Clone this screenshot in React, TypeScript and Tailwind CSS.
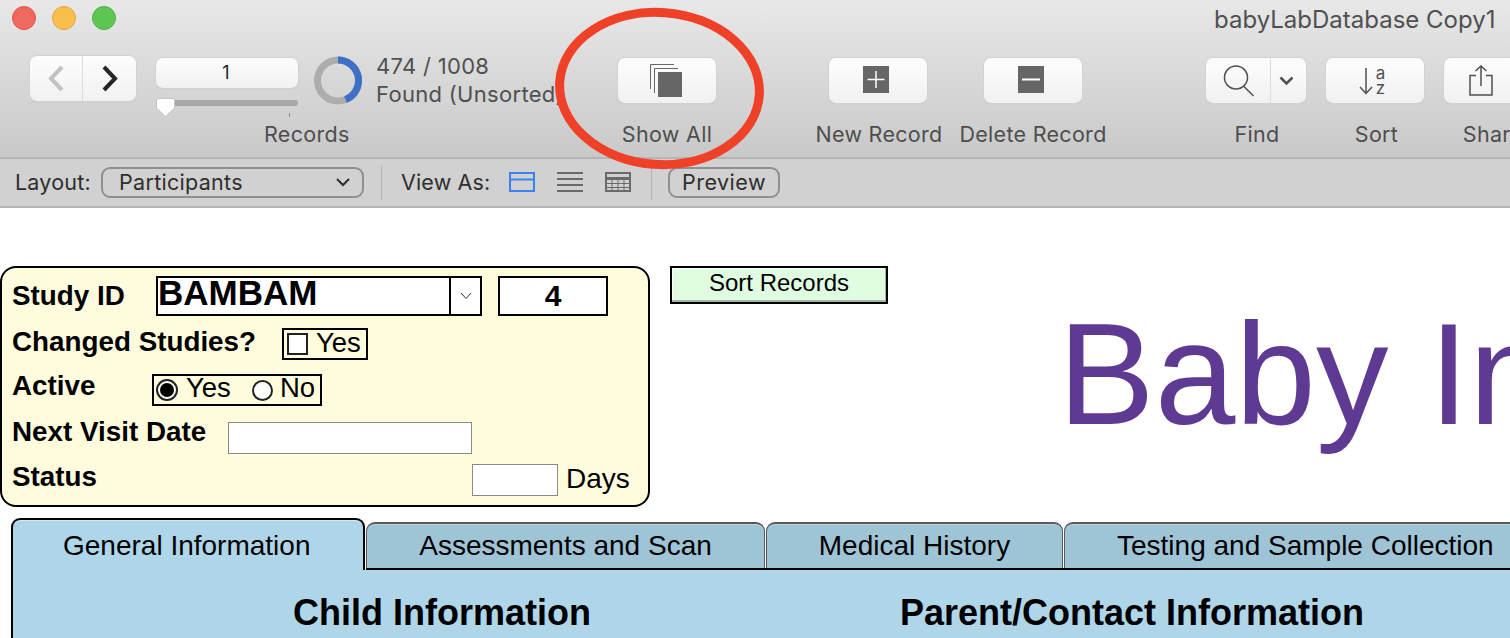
import type { ReactNode } from 'react';

const sf = "font-['Inter',sans-serif]";
const form = "font-['Liberation_Sans',Arial,sans-serif]";
const btn = 'rounded-[7px] bg-gradient-to-b from-[#fdfdfd] to-[#f1f1f1] shadow-[0_0_0_1px_#d2d2d2,0_1px_1px_#a8a8a8]';
const toolLabel = 'h-[24px] whitespace-nowrap text-[21.5px] leading-[24px] tracking-[0.3px] text-[#4e4e4e]';

function Tool({ label, ml, w, children, inner = '', labelPad = '' }: { label: string; ml: string; w: string; children: ReactNode; inner?: string; labelPad?: string }) {
  return (
    <div className={`flex shrink-0 flex-col items-center pt-[2px] ${ml} ${w}`}>
      <div className={`${btn} flex h-[45px] w-full items-center justify-center ${inner}`}>{children}</div>
      <div className={`mt-[19px] ${toolLabel} ${labelPad}`}>{label}</div>
    </div>
  );
}

function Toolbar() {
  return (
    <div className={`${sf} h-[157px] bg-gradient-to-b from-[#e8e8e8] to-[#c9c9c9]`}>
      <div className="flex h-[56px] items-start">
        <div className="flex gap-[16px] pl-[12px] pt-[6px]">
          <div className="h-[24px] w-[24px] rounded-full border border-[#e2544c] bg-[#f0695f]" />
          <div className="h-[24px] w-[24px] rounded-full border border-[#e0a63e] bg-[#f8bf4d]" />
          <div className="h-[24px] w-[24px] rounded-full border border-[#4cae45] bg-[#5ec552]" />
        </div>
        <div className="ml-[1098px] whitespace-nowrap pt-[5px] text-[24px] leading-[30px] text-[#505050]">babyLabDatabase Copy1</div>
      </div>
      <div className="flex items-start pl-[30px]">
        <div className="w-[525px] shrink-0">
          <div className="flex h-[66px] items-start">
            <div className={`${btn} flex h-[45px] w-[106px] shrink-0`}>
              <div className="flex w-[53px] items-center justify-center border-r border-[#dcdcdc]">
                <svg width="18" height="27" viewBox="0 0 18 27" fill="none" stroke="#c2c2c2" strokeWidth="4"><path d="M15 2 4 13.500 15 25" /></svg>
              </div>
              <div className="flex flex-1 items-center justify-center">
                <svg width="18" height="27" viewBox="0 0 18 27" fill="none" stroke="#262626" strokeWidth="4"><path d="M3 2 14 13.500 3 25" /></svg>
              </div>
            </div>
            <div className="ml-[20px] w-[142px] shrink-0 pt-[2px]">
              <div className={`${btn} h-[30px] pr-[2px] text-center text-[18px] leading-[30px] text-[#222]`}>1</div>
              <div className="relative mt-[12px] h-[6px] rounded-full bg-[#a9a9a9]">
                <svg className="absolute left-0 top-[-2px]" width="19" height="19" viewBox="0 0 19 19">
                  <path d="M2 .5h15a1.500 1.500 0 0 1 1.500 1.500v8L9.500 18.500.5 10V2A1.500 1.500 0 0 1 2 .5Z" fill="#fff" stroke="#c4c4c4" />
                </svg>
                <div className="absolute left-[133px] top-[13px] h-[4px] w-px bg-[#8e8e8e]" />
              </div>
            </div>
            <svg className="ml-[16px] shrink-0" width="48" height="49" viewBox="0 0 48 49" fill="none" strokeWidth="7">
              <circle cx="24" cy="24.500" r="20.500" stroke="#adadad" />
              <path d="M24 4A20.500 20.500 0 0 1 31.500 43.600" stroke="#3f6fc6" />
            </svg>
            <div className="ml-[14px] mt-[-4px] whitespace-nowrap text-[22px] leading-[28px] tracking-[0.3px] text-[#505050]">
              474 / 1008
              <br />
              Found (Unsorted)
            </div>
          </div>
          <div className={`${toolLabel} pl-[234px]`}>Records</div>
        </div>
        <Tool label="Show All" ml="ml-[63px]" w="w-[98px]" inner="pr-[2px]">
          <svg width="32" height="33" viewBox="0 0 32 33" fill="none" stroke="#666" strokeWidth="1">
            <path d="M.5 25V.5H24" />
            <path d="M4.500 29V4.500H28" />
            <rect x="8" y="8" width="24" height="25" fill="#666" stroke="none" />
          </svg>
        </Tool>
        <Tool label="New Record" ml="ml-[113px]" w="w-[98px]" inner="pb-[2px] pr-[4px]" labelPad="pl-[2px]">
          <svg width="26" height="27" viewBox="0 0 26 27"><rect width="26" height="27" fill="#666" /><path d="M13 5v17M4.500 13.500h17" stroke="#fff" strokeWidth="1.500" /></svg>
        </Tool>
        <Tool label="Delete Record" ml="ml-[57px]" w="w-[98px]" inner="pb-[2px] pr-[4px]">
          <svg width="26" height="27" viewBox="0 0 26 27"><rect width="26" height="27" fill="#666" /><path d="M4 13.500h18" stroke="#fff" strokeWidth="2" /></svg>
        </Tool>
        <div className="ml-[124px] flex w-[100px] shrink-0 flex-col items-center pt-[2px]">
          <div className={`${btn} flex h-[45px] w-full`}>
            <div className="flex w-[65px] items-center justify-center border-r border-[#dcdcdc]">
              <svg width="34" height="33" viewBox="0 0 34 33" fill="none" stroke="#505050" strokeWidth="1.500"><circle cx="15" cy="13.500" r="11.500" /><path d="m22.500 22 10 10" /></svg>
            </div>
            <div className="flex flex-1 items-center justify-center pr-[4px]">
              <svg width="15" height="10" viewBox="0 0 15 10" fill="none" stroke="#505050" strokeWidth="2.500"><path d="m1.500 1.500 6 6 6-6" /></svg>
            </div>
          </div>
          <div className={`mt-[19px] ${toolLabel} pl-[2px]`}>Find</div>
        </div>
        <Tool label="Sort" ml="ml-[20px]" w="w-[98px]" inner="pr-[6px]" labelPad="pl-[3px]">
          <svg width="14" height="28" viewBox="0 0 14 28" fill="none" stroke="#505050" strokeWidth="1.500"><path d="M7 1v25M1 20l6 6.500L13 20" /></svg>
          <div className="ml-[3px] flex flex-col items-center text-[17px] leading-[15px] text-[#505050]">
            <span>a</span>
            <span>z</span>
          </div>
        </Tool>
        <Tool label="Share" ml="ml-[20px]" w="w-[98px]" inner="pr-[24px]">
          <svg width="24" height="31" viewBox="0 0 24 31" fill="none" stroke="#505050" strokeWidth="1.500"><path d="M7 10.500H1V30h22V10.500h-6M12 21V1M6.500 6 12 1l5.500 5" /></svg>
        </Tool>
      </div>
    </div>
  );
}

function LayoutBar() {
  return (
    <div className={`${sf} flex h-[51px] items-center border-y-2 border-[#b4b4b4] bg-[#d1d1d1] pb-[1px] pl-[15px] text-[21.5px] text-[#2e2e2e]`}>
      <span className="w-[86px] shrink-0 tracking-[0.2px]">Layout:</span>
      <div className="flex h-[31px] w-[263px] shrink-0 items-center justify-between rounded-[9px] border-2 border-[#8f8f8f] pl-[16px] pr-[12px]">
        <span className="tracking-[0.3px]">Participants</span>
        <svg width="14" height="9" viewBox="0 0 14 9" fill="none" stroke="#2e2e2e" strokeWidth="2"><path d="m1 1 6 6 6-6" /></svg>
      </div>
      <div className="ml-[17px] h-[35px] w-px bg-[#b2b2b2]" />
      <span className="ml-[19px] w-[108px] shrink-0 tracking-[0.15px]">View As:</span>
      <svg width="26" height="20" viewBox="0 0 26 20" fill="none" stroke="#3a82f7" strokeWidth="2"><rect x="1" y="1" width="24" height="18" /><path d="M1 7.500h24" /></svg>
      <svg className="ml-[22px]" width="26" height="20" viewBox="0 0 26 20" fill="none" stroke="#6a6a6a" strokeWidth="2"><path d="M0 1h26M0 7h26M0 13h26M0 19h26" /></svg>
      <svg className="ml-[22px]" width="26" height="20" viewBox="0 0 26 20" fill="none" stroke="#6a6a6a"><rect x="1" y="1" width="24" height="18" strokeWidth="2" /><path d="M1 6.500h24" strokeWidth="3" /><path d="M1 11.500h24M1 15.500h24M7 7v12M13 7v12M19 7v12" /></svg>
      <div className="ml-[20px] h-[35px] w-px bg-[#b2b2b2]" />
      <div className="ml-[16px] flex h-[31px] w-[112px] shrink-0 items-center justify-center rounded-[9px] border-2 border-[#8f8f8f] tracking-[0.5px]">Preview</div>
    </div>
  );
}

function Label({ w, shift, children }: { w: string; shift: string; children: ReactNode }) {
  return <div className={`shrink-0 whitespace-nowrap text-[27.8px] font-bold ${w} ${shift}`}>{children}</div>;
}

function StudyPanel() {
  return (
    <div className="h-[241px] w-[650px] shrink-0 rounded-[16px] border-2 border-black bg-[#fefcdd] pl-[10px] pt-[8px] text-black">
      <div className="flex h-[40px] items-center">
        <Label w="w-[144px]" shift="">Study ID</Label>
        <div className="flex h-[40px] w-[326px] shrink-0 border-2 border-black bg-white">
          <div className="flex-1 text-[35px] font-bold leading-[30px]">BAMBAM</div>
          <div className="flex w-[31px] items-center justify-center border-l-2 border-black">
            <svg width="12" height="8" viewBox="0 0 12 8" fill="none" stroke="#333"><path d="m1 1 5 5.500L11 1" /></svg>
          </div>
        </div>
        <div className="ml-[16px] h-[40px] w-[110px] shrink-0 border-2 border-black bg-white text-center text-[30px] font-bold leading-[35px]">4</div>
      </div>
      <div className="mt-[12px] flex h-[32px] items-center">
        <Label w="w-[270px]" shift="pb-[4px]">Changed Studies?</Label>
        <div className="flex h-[32px] w-[86px] shrink-0 items-center border-2 border-black pl-[3px] text-[27.5px]">
          <div className="h-[22px] w-[21px] border-2 border-[#222] bg-white" />
          <span className="ml-[8px] pb-[3px]">Yes</span>
        </div>
      </div>
      <div className="mt-[14px] flex h-[32px] items-center">
        <Label w="w-[140px]" shift="pb-[8px]">Active</Label>
        <div className="flex h-[32px] w-[170px] shrink-0 items-center border-2 border-black pl-[2px] text-[27.5px]">
          <div className="flex h-[22px] w-[22px] shrink-0 items-center justify-center rounded-full border-2 border-[#222] bg-white">
            <div className="h-[14px] w-[14px] rounded-full bg-black" />
          </div>
          <span className="ml-[8px] w-[66px] shrink-0 pb-[5px]">Yes</span>
          <div className="h-[21px] w-[21px] shrink-0 rounded-full border-2 border-[#222] bg-white" />
          <span className="ml-[7px] pb-[5px]">No</span>
        </div>
      </div>
      <div className="mt-[16px] flex h-[32px] items-center">
        <Label w="w-[216px]" shift="pb-[12px]">Next Visit Date</Label>
        <div className="h-[32px] w-[244px] shrink-0 border border-[#8a8a8a] bg-white" />
      </div>
      <div className="mt-[10px] flex h-[32px] items-center">
        <Label w="w-[460px]" shift="pb-[6px]">Status</Label>
        <div className="h-[32px] w-[86px] shrink-0 border border-[#8a8a8a] bg-white" />
        <span className="ml-[8px] pb-[3px] text-[28px]">Days</span>
      </div>
    </div>
  );
}

function Tabs() {
  const tabText = 'whitespace-nowrap text-[28px] leading-[36px] text-black';
  const inactive = 'h-[46px] shrink-0 rounded-t-[9px] border-x border-t-2 border-[#5a5a5a] border-b-0 bg-[#9fc4d6] pt-[4px] shadow-[inset_0_1px_0_#b9d6e4]';
  return (
    <div className="ml-[11px] mt-[11px] overflow-hidden">
      <div className="flex h-[52px] items-end gap-[1px]">
        <div className={`${tabText} h-[52px] w-[354px] shrink-0 rounded-t-[9px] border-x-2 border-t-2 border-black bg-[#aed6e8] pl-[50px] pt-[8px] shadow-[inset_0_1px_0_#cfe8f3]`}>General Information</div>
        <div className="flex flex-1 items-end gap-[1px] border-b-2 border-black">
          <div className={`${tabText} ${inactive} w-[399px] text-center`}>Assessments and Scan</div>
          <div className={`${tabText} ${inactive} w-[297px] text-center`}>Medical History</div>
          <div className={`${tabText} ${inactive} w-[460px] pl-[52px]`}>Testing and Sample Collection</div>
        </div>
      </div>
      <div className="flex h-[68px] border-l-2 border-black bg-[#aed6e8] pt-[23px] text-[36px] font-bold leading-[40px] text-black">
        <div className="ml-[280px] w-[607px] shrink-0 whitespace-nowrap">Child Information</div>
        <div className="whitespace-nowrap">Parent/Contact Information</div>
      </div>
    </div>
  );
}

export default function App() {
  return (
    <div className="relative h-[638px] w-[1510px] overflow-hidden bg-white">
      <Toolbar />
      <LayoutBar />
      <div className={form}>
        <div className="flex items-start pt-[58px]">
          <StudyPanel />
          <div className="ml-[20px] h-[38px] w-[218px] shrink-0 border-2 border-black bg-[#dffde0] text-center text-[24px] leading-[30px] text-black shadow-[inset_-1px_-2px_0_#a6b5a6,inset_1px_1px_0_#fff]">Sort Records</div>
          <div className="ml-[170px] mt-[23px] whitespace-nowrap text-[145px] leading-[170px] text-[#5e3a92]">Baby In</div>
        </div>
        <Tabs />
      </div>
      <svg className="pointer-events-none absolute left-[545px] top-0" width="230" height="180" viewBox="0 0 230 180" fill="none">
        <ellipse cx="114.500" cy="88.500" rx="100" ry="76" stroke="#ee4128" strokeWidth="9" transform="rotate(4 114.500 88.500)" />
      </svg>
    </div>
  );
}
